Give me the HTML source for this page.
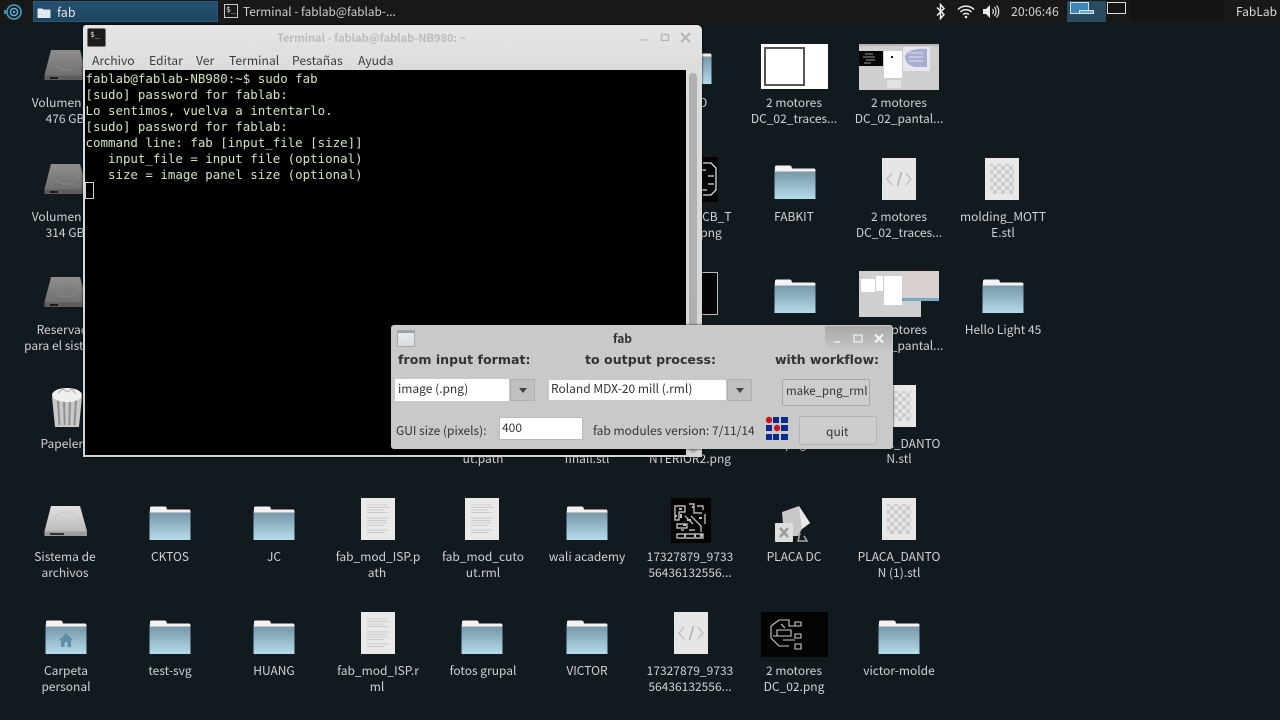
<!DOCTYPE html>
<html lang="es"><head><meta charset="utf-8"><title>Desktop</title>
<style>
*{box-sizing:border-box}
html,body{margin:0;padding:0;width:1280px;height:720px;overflow:hidden;background:#101a1f}
body{position:relative;font-family:"Noto Sans CJK SC","Liberation Sans",sans-serif}
.a{position:absolute}
.l{position:absolute;width:104px;margin-top:1px;text-align:center;color:#d2d2d2;font-size:12px;line-height:16px;white-space:nowrap}
svg{display:block;position:absolute;overflow:visible}
.term{position:absolute;left:85.500px;font:12.450px/16px "DejaVu Sans Mono",monospace;color:#cfe6bc;white-space:pre}
.m{position:absolute;top:52px;font-size:12.200px;line-height:16px;color:#3c3c3c}
.d{position:absolute;color:#333;white-space:nowrap}
.b{font-family:"DejaVu Sans",sans-serif;font-weight:700;font-size:12.600px;line-height:18px;color:#333;top:351px}
</style></head><body>
<svg width="0" height="0" style="position:absolute">
<defs>
<linearGradient id="fg" x1="0" y1="0" x2="0" y2="1"><stop offset="0" stop-color="#7a98a9"/><stop offset=".15" stop-color="#80a1b3"/><stop offset="1" stop-color="#b5dcea"/></linearGradient>
<linearGradient id="dg" x1="0" y1="0" x2="0" y2="1"><stop offset="0" stop-color="#8e8e8e"/><stop offset="1" stop-color="#6c6c6c"/></linearGradient>
<linearGradient id="dw" x1="0" y1="0" x2="0" y2="1"><stop offset="0" stop-color="#e2e2e2"/><stop offset="1" stop-color="#b4b4b4"/></linearGradient>
<symbol id="folder" viewBox="0 0 42 35" width="42" height="35">
<path d="M1 3.500V2q0-1.500 1.500-1.500H16q1.500 0 2 3H40q1.500 0 1.500 2V7H.5z" fill="#f2f2f2"/>
<path d="M.5 6.500H41.500V34H.5z" fill="url(#fg)"/>
</symbol>
<symbol id="doc" viewBox="0 0 34 42" width="34" height="42">
<rect width="34" height="42" fill="#e9e9e9"/>
<path d="M6 7h20M6 9.500h22M6 12h17M6 14.500h21M6 20h22M6 22.500h19M6 25h21M6 27.500h17M6 32h22M6 34.500h18" stroke="#cacaca" stroke-width="1"/>
</symbol>
<symbol id="code" viewBox="0 0 34 42" width="34" height="42">
<rect width="34" height="42" fill="#e6e6e6"/>
<path d="M10 15l-5 6 5 6M24 15l5 6-5 6" fill="none" stroke="#c4c4c4" stroke-width="1.500"/>
<path d="M19.500 14l-4 14" fill="none" stroke="#b0b0b0" stroke-width="1.500"/>
</symbol>
<pattern id="chk" width="8" height="8" patternUnits="userSpaceOnUse"><rect width="8" height="8" fill="#e6e6e6"/><rect width="4" height="4" fill="#cccccc"/><rect x="4" y="4" width="4" height="4" fill="#cccccc"/></pattern>
<symbol id="stl" viewBox="0 0 34 42" width="34" height="42">
<rect width="34" height="42" fill="#e8e8e8"/><rect x="5" y="6" width="24" height="30" fill="url(#chk)"/>
</symbol>
<symbol id="drive" viewBox="0 0 44 32" width="44" height="32">
<path d="M7 0H36L43 25V29H.5V25z" fill="url(#dg)"/>
<ellipse cx="22" cy="13" rx="11" ry="7" fill="none" stroke="#858585" stroke-width="1"/>
<path d="M.5 25.500H43V30H.5z" fill="#5d5d5d"/><rect x="6" y="27" width="8" height="2" fill="#1b1b1b"/>
</symbol>
<symbol id="drivew" viewBox="0 0 44 32" width="44" height="32">
<path d="M7 0H36L43 25V29H.5V25z" fill="url(#dw)"/>
<ellipse cx="22" cy="13" rx="11" ry="7" fill="none" stroke="#c8c8c8" stroke-width="1"/>
<path d="M.5 25.500H43V30H.5z" fill="#9c9c9c"/><rect x="6" y="27" width="14" height="2" fill="#333"/>
</symbol>
<symbol id="pcb" viewBox="0 0 40 45" width="40" height="45">
<rect width="40" height="45" fill="#050505"/>
<path d="M4 8h10v6H8v8H4zM18 6h5v9h8M26 8h6v4M6 26h10v4H6zM20 18l10 10v6M14 18l8 8M6 36h26v4H6zM34 16v10M10 32h3M18 32h6" fill="none" stroke="#d5d5d5" stroke-width="1.200"/>
<path d="M4 18h2M10 16v4M16 22h4M28 20h3M24 36v3M14 36v3M30 36v3M8 11h3M21 9h2M12 27h3M30 37h2" stroke="#bbb" stroke-width="2"/>
</symbol>
<symbol id="shot" viewBox="0 0 80 46" width="80" height="46">
<rect width="80" height="46" fill="#cfcfcf"/>
<rect y="0" width="80" height="2" fill="#b5b5b5"/>
<rect x="0" y="7" width="24" height="15" fill="#070707"/>
<path d="M6 10h8M4 13h12M7 16h9M5 19h7" stroke="#999" stroke-width="1"/>
<rect x="25" y="7" width="18" height="27" fill="#fff"/><rect x="32" y="12" width="2" height="2" fill="#111"/>
<rect x="44" y="3" width="27" height="24" fill="#e6e6ee"/>
<path d="M46 12c3-6 12-8 22-7v18H56c-6-1-10-5-10-11z" fill="#a7aed2"/>
<path d="M50 9h14M50 13h14M50 17h14" stroke="#dfe1ee" stroke-width="1"/>
<rect x="28" y="36" width="14" height="8" fill="#e2e2e2"/>
</symbol>
</defs>
</svg>

<!-- Top panel -->
<div class="a" style="left:0;top:0;width:1280px;height:23px;background:#181818"></div>
<svg style="left:3px;top:2px" width="20" height="20" viewBox="0 0 20 20"><circle cx="11" cy="10" r="7" fill="none" stroke="#3e93b8" stroke-width="1.800"/><circle cx="11" cy="10" r="3.600" fill="none" stroke="#5fb4d8" stroke-width="1.500"/><circle cx="11" cy="10" r="1.300" fill="#5fb4d8"/><path d="M2 8v4M1 9.500h2" stroke="#3e93b8" stroke-width="2"/></svg>
<div class="a" style="left:33px;top:1px;width:185px;height:21px;background:linear-gradient(#234f70,#1d4560);border:1px solid #2a5878"></div>
<svg style="left:37px;top:7px" width="14" height="11" viewBox="0 0 14 11"><path d="M.5 1.500h5l1 1h7V11H.5z" fill="#dfe9ee"/></svg>
<div class="a" style="left:57px;top:3px;font-size:12.500px;line-height:17px;color:#e6e6e6">fab</div>
<div class="a" style="left:224px;top:4px;width:14px;height:14px;background:#1a1a1a;border:1px solid #c8c8c8;color:#ddd;font:8px/10px 'DejaVu Sans Mono',monospace;padding-left:1px">$_</div>
<div class="a" style="left:243px;top:3px;font-size:11.800px;line-height:17px;color:#d0d0d0;white-space:nowrap">Terminal - fablab@fablab-...</div>
<svg style="left:935px;top:3px" width="12" height="17" viewBox="0 0 12 17"><path d="M2 4.500l7 7-3.500 4V1.500l3.500 4-7 7" fill="none" stroke="#eee" stroke-width="1.500"/></svg>
<svg style="left:957px;top:4px" width="18" height="15" viewBox="0 0 18 15"><path d="M1 5.500c4.500-4.500 11.500-4.500 16 0M3.500 8c3-3 8-3 11 0M6 10.500c1.500-1.500 4.500-1.500 6 0" fill="none" stroke="#eee" stroke-width="1.500"/><circle cx="9" cy="13" r="1.300" fill="#eee"/></svg>
<svg style="left:982px;top:4px" width="18" height="15" viewBox="0 0 18 15"><path d="M1 5h3l4-4v13l-4-4H1z" fill="#eee"/><path d="M10.500 5c1 1.500 1 3.500 0 5M12.500 3c2 2.500 2 6.500 0 9M14.500 1.500c3 3.500 3 8.500 0 12" fill="none" stroke="#ddd" stroke-width="1.200"/></svg>
<div class="a" style="left:1011px;top:3px;font-size:12.300px;line-height:17px;color:#d0d0d0">20:06:46</div>
<div class="a" style="left:1067px;top:1px;width:39px;height:21px;background:#2b4b60"></div>
<div class="a" style="left:1070px;top:2px;width:19px;height:12px;background:#3d87b8;border:1px solid #cfe3ee"></div>
<div class="a" style="left:1079px;top:10px;width:15px;height:4px;background:#6aa9c9;border:1px solid #cfe3ee"></div>
<div class="a" style="left:1107px;top:2px;width:19px;height:12px;background:#151515;border:1px solid #dedede"></div>
<div class="a" style="left:1130px;top:1px;width:94px;height:21px;background:#141414"></div>
<div class="a" style="left:1236px;top:3px;font-size:12px;line-height:17px;color:#d8d8d8">FabLab</div>

<!-- Desktop icons: col 0 -->
<svg style="left:44px;top:50px" width="44" height="32"><use href="#drive"/></svg>
<div class="l" style="left:13px;top:94px">Volumen de</div><div class="l" style="left:13px;top:110px">476 GB</div>
<svg style="left:44px;top:164px" width="44" height="32"><use href="#drive"/></svg>
<div class="l" style="left:13px;top:208px">Volumen de</div><div class="l" style="left:13px;top:224px">314 GB</div>
<svg style="left:44px;top:277px" width="44" height="32"><use href="#drive"/></svg>
<div class="l" style="left:14px;top:321px">Reservado</div><div class="l" style="left:14px;top:337px">para el sistema</div>
<svg style="left:50px;top:386px" width="34" height="42" viewBox="0 0 34 42"><path d="M2 11H32L29 41H5z" fill="#c9c9c9"/><path d="M8 14l1.500 25M14 14l.7 25M20 14l-.7 25M26 14l-1.500 25" stroke="#8f8f8f" stroke-width="2"/><ellipse cx="17" cy="9" rx="15" ry="7" fill="#efefef"/><path d="M8 7l5-4 4 3 5-3 4 5" fill="none" stroke="#aaa"/></svg>
<div class="l" style="left:13px;top:435px">Papelera</div>
<svg style="left:44px;top:506px" width="44" height="32"><use href="#drivew"/></svg>
<div class="l" style="left:13px;top:548px">Sistema de</div><div class="l" style="left:13px;top:564px">archivos</div>
<svg style="left:45px;top:620px" width="42" height="35"><use href="#folder"/></svg>
<svg style="left:59px;top:633px" width="14" height="14" viewBox="0 0 14 14"><path d="M0 7L7 0l7 7h-2v7H8.500V9h-3v5H2V7z" fill="#5f8fa5"/></svg>
<div class="l" style="left:14px;top:662px">Carpeta</div><div class="l" style="left:14px;top:678px">personal</div>

<!-- col 1-5 bottom -->
<svg style="left:149px;top:506px" width="42" height="35"><use href="#folder"/></svg>
<div class="l" style="left:118px;top:548px">CKTOS</div>
<svg style="left:149px;top:620px" width="42" height="35"><use href="#folder"/></svg>
<div class="l" style="left:118px;top:662px">test-svg</div>
<svg style="left:253px;top:506px" width="42" height="35"><use href="#folder"/></svg>
<div class="l" style="left:222px;top:548px">JC</div>
<svg style="left:253px;top:620px" width="42" height="35"><use href="#folder"/></svg>
<div class="l" style="left:222px;top:662px">HUANG</div>
<svg style="left:361px;top:498px" width="34" height="42"><use href="#doc"/></svg>
<div class="l" style="left:326px;top:548px">fab_mod_ISP.p</div><div class="l" style="left:325px;top:564px">ath</div>
<svg style="left:361px;top:612px" width="34" height="42"><use href="#doc"/></svg>
<div class="l" style="left:326px;top:662px">fab_mod_ISP.r</div><div class="l" style="left:325px;top:678px">ml</div>
<svg style="left:465px;top:498px" width="34" height="42"><use href="#doc"/></svg>
<div class="l" style="left:431px;top:548px">fab_mod_cuto</div><div class="l" style="left:431px;top:564px">ut.rml</div>
<svg style="left:461px;top:620px" width="42" height="35"><use href="#folder"/></svg>
<div class="l" style="left:431px;top:662px">fotos grupal</div>
<svg style="left:566px;top:506px" width="42" height="35"><use href="#folder"/></svg>
<div class="l" style="left:535px;top:548px">wali academy</div>
<svg style="left:566px;top:620px" width="42" height="35"><use href="#folder"/></svg>
<div class="l" style="left:535px;top:662px">VICTOR</div>

<!-- col 6 -->
<svg style="left:671px;top:498px" width="40" height="45"><use href="#pcb"/></svg>
<div class="l" style="left:638px;top:548px">17327879_9733</div><div class="l" style="left:638px;top:564px">56436132556...</div>
<svg style="left:674px;top:612px" width="34" height="42"><use href="#code"/></svg>
<div class="l" style="left:638px;top:662px">17327879_9733</div><div class="l" style="left:638px;top:678px">56436132556...</div>

<!-- col 7 -->
<svg style="left:774px;top:505px" width="38" height="38" viewBox="0 0 38 38"><path d="M8 7l17-6 11 17-8 6-4 7H10z" fill="#c7c7c7"/><path d="M25 1l11 17-8 6z" fill="#e8e8e8"/><path d="M26 28l-2 8h9l-3-5" fill="none" stroke="#aaa" stroke-width="1.500"/><rect x="1" y="18" width="18" height="19" rx="1" fill="#dedede"/><path d="M6 23l8 9M14 23l-8 9" stroke="#9b9b9b" stroke-width="2.500"/></svg>
<div class="l" style="left:742px;top:548px">PLACA DC</div>
<svg style="left:761px;top:612px" width="67" height="45" viewBox="0 0 67 45"><rect width="67" height="45" fill="#040404"/><path d="M10 14l8-6h10v6h9M10 14v12l8 8h10M16 18h14v6H16zM34 10h6v4h-6zM34 22h6v4h-6zM34 32h6v5h-6zM22 28h12M20 12l4 4M12 24h6" fill="none" stroke="#ccc" stroke-width="1.100"/></svg>
<div class="l" style="left:742px;top:662px">2 motores</div><div class="l" style="left:742px;top:678px">DC_02.png</div>

<!-- col 8 -->
<svg style="left:882px;top:498px" width="34" height="42"><use href="#stl"/></svg>
<div class="l" style="left:847px;top:548px">PLACA_DANTO</div><div class="l" style="left:847px;top:564px">N (1).stl</div>
<svg style="left:878px;top:620px" width="42" height="35"><use href="#folder"/></svg>
<div class="l" style="left:847px;top:662px">victor-molde</div>

<!-- upper right icons -->
<svg style="left:691px;top:50px" width="21" height="36" viewBox="21 0 21 36"><use href="#folder"/></svg>
<div class="l" style="left:638px;top:94px">2 AMD</div>
<div class="a" style="left:761px;top:44px;width:67px;height:45px;background:#fff"><div class="a" style="left:3px;top:3px;width:41px;height:39px;border:2px solid #555"></div></div>
<div class="l" style="left:742px;top:94px">2 motores</div><div class="l" style="left:742px;top:110px">DC_02_traces...</div>
<svg style="left:859px;top:44px" width="80" height="46"><use href="#shot"/></svg>
<div class="l" style="left:847px;top:94px">2 motores</div><div class="l" style="left:847px;top:110px">DC_02_pantal...</div>

<div class="a" style="left:690px;top:157px;width:28px;height:45px;background:#050505"></div>
<svg style="left:700px;top:160px" width="18" height="38" viewBox="0 0 18 38"><path d="M3 3h8l5 5v22l-5 5H3M2 10h4M8 16h6M8 24h6M2 30h5" fill="none" stroke="#ddd" stroke-width="1.300"/></svg>
<div class="l" style="left:661px;top:208px">PCB_T</div><div class="l" style="left:659px;top:224px">png</div>
<svg style="left:774px;top:165px" width="42" height="35"><use href="#folder"/></svg>
<div class="l" style="left:742px;top:208px">FABKIT</div>
<svg style="left:882px;top:158px" width="34" height="42"><use href="#code"/></svg>
<div class="l" style="left:847px;top:208px">2 motores</div><div class="l" style="left:847px;top:224px">DC_02_traces...</div>
<svg style="left:985px;top:158px" width="34" height="42"><use href="#stl"/></svg>
<div class="l" style="left:951px;top:208px">molding_MOTT</div><div class="l" style="left:951px;top:224px">E.stl</div>

<div class="a" style="left:690px;top:272px;width:28px;height:43px;background:#050505;border:1px solid #bbb"></div>
<svg style="left:774px;top:279px" width="42" height="35"><use href="#folder"/></svg>
<svg style="left:859px;top:271px" width="80" height="46" viewBox="0 0 80 46"><rect width="62" height="46" fill="#cfcfcf"/><rect x="43" width="37" height="28" fill="#d8cfcf"/><rect x="43" y="27" width="37" height="3" fill="#7aa9c5"/><rect x="2" y="8" width="14" height="13" fill="#fff"/><rect x="17" y="5" width="7" height="15" fill="#fff"/><rect x="25" y="5" width="18" height="29" fill="#fff"/></svg>
<div class="l" style="left:847px;top:321px">2 motores</div><div class="l" style="left:847px;top:337px">DC_02_pantal...</div>
<svg style="left:982px;top:279px" width="42" height="35"><use href="#folder"/></svg>
<div class="l" style="left:951px;top:321px">Hello Light 45</div>

<svg style="left:882px;top:385px" width="34" height="42"><use href="#stl"/></svg>
<div class="l" style="left:847px;top:435px">PLACA_DANTO</div><div class="l" style="left:847px;top:450px">N.stl</div>
<div class="l" style="left:431px;top:450px">ut.path</div>
<div class="l" style="left:535px;top:450px">finall.stl</div>
<div class="l" style="left:638px;top:450px">NTERIOR2.png</div>
<div class="l" style="left:742px;top:435px">.png</div>

<!-- Terminal window -->
<div class="a" style="left:83px;top:25px;width:619px;height:432px;background:linear-gradient(#e6e6e6,#dcdcdc 10%,#d4d4d4);border-radius:3px 5px 0 0;box-shadow:0 0 2px #000"></div>
<div class="a" style="left:87px;top:28px;width:19px;height:19px;background:#1c1c1c;border:1px solid #777;border-radius:2px;color:#ddd;font:8px/11px 'DejaVu Sans Mono',monospace;padding-left:2px">$_</div>
<div class="a" style="left:277px;top:30px;font-size:11px;line-height:16px;font-weight:700;color:#bcbcbc;white-space:nowrap">Terminal - fablab@fablab-NB980: ~</div>
<svg style="left:640px;top:30px" width="55" height="16" viewBox="0 0 55 16"><path d="M1 10h7" stroke="#c2c2c2" stroke-width="1.500"/><rect x="21.500" y="4.500" width="7" height="6" fill="none" stroke="#b4b4b4" stroke-width="1.300"/><path d="M41 3l9 9M50 3l-9 9" stroke="#b0b0b0" stroke-width="1.800"/></svg>
<div style="position:absolute;left:0;top:0"><div class="m" style="left:92px">Archivo</div><div class="m" style="left:149px">Editar</div><div class="m" style="left:196px">Ver</div><div class="m" style="left:229px">Terminal</div><div class="m" style="left:292px">Pestañas</div><div class="m" style="left:358px">Ayuda</div></div>
<div class="a" style="left:85px;top:70px;width:601px;height:385px;background:#000"></div>
<div class="a" style="left:689px;top:73px;width:8px;height:380px;background:#b0b0b0;border-radius:4px"></div>
<div class="term" style="top:71px">fablab@fablab-NB980:~$ sudo fab</div>
<div class="term" style="top:87px">[sudo] password for fablab:</div>
<div class="term" style="top:103px">Lo sentimos, vuelva a intentarlo.</div>
<div class="term" style="top:119px">[sudo] password for fablab:</div>
<div class="term" style="top:135px">command line: fab [input_file [size]]</div>
<div class="term" style="top:151px">   input_file = input file (optional)</div>
<div class="term" style="top:167px">   size = image panel size (optional)</div>
<div class="a" style="left:85px;top:182px;width:9px;height:17px;border:1px solid #cfcfcf"></div>

<!-- fab dialog -->
<div class="a" style="left:391px;top:325px;width:502px;height:124px;background:#c9c9c9;border-radius:3px;box-shadow:0 0 2px #111"></div>
<div class="a" style="left:397px;top:330px;width:18px;height:17px;background:linear-gradient(#8fa3ae 0,#8fa3ae 2px,#e8eaec 2px,#d8dcde);border:1px solid #aaa"></div>
<div class="a" style="left:613px;top:331px;font-size:12px;line-height:15px;font-weight:700;color:#333">fab</div>
<div class="a" style="left:825px;top:326px;width:67px;height:24px;background:linear-gradient(#a9a9a9,#c4c4c4);border-radius:0 2px 0 8px"></div>
<svg style="left:830px;top:332px" width="56" height="14" viewBox="0 0 56 14"><path d="M4 10h6" stroke="#eee" stroke-width="1.500"/><rect x="24" y="3" width="8" height="7" fill="none" stroke="#eee" stroke-width="1.300"/><path d="M45 2.500l8 8M53 2.500l-8 8" stroke="#f4f4f4" stroke-width="2"/></svg>
<div class="d b" style="left:398px">from input format:</div>
<div class="d b" style="left:585px">to output process:</div>
<div class="d b" style="left:775px;letter-spacing:-.1px">with workflow:</div>
<div class="a" style="left:395px;top:379px;width:114px;height:22px;background:#fff"></div>
<div class="a" style="left:510px;top:379px;width:25px;height:22px;background:#c0c0c0;border:1px solid #b0b0b0"></div>
<svg style="left:518px;top:387px" width="10" height="7" viewBox="0 0 10 7"><path d="M1 1h8L5 6z" fill="#444"/></svg>
<div class="d" style="left:398px;top:380px;font-size:12px;line-height:17px">image (.png)</div>
<div class="a" style="left:548px;top:379px;width:179px;height:22px;background:#fff;border:1px solid #c8c8c8"></div>
<div class="a" style="left:727px;top:379px;width:25px;height:22px;background:#c0c0c0;border:1px solid #b0b0b0"></div>
<svg style="left:735px;top:387px" width="10" height="7" viewBox="0 0 10 7"><path d="M1 1h8L5 6z" fill="#444"/></svg>
<div class="d" style="left:551px;top:380px;font-size:12px;line-height:17px">Roland MDX-20 mill (.rml)</div>
<div class="a" style="left:782px;top:379px;width:88px;height:27px;background:#cdcdcd;border:1px solid #a8a8a8;border-radius:2px"></div>
<div class="d" style="left:786px;top:383px;font-size:11.500px;line-height:17px">make_png_rml</div>
<div class="d" style="left:396px;top:422px;font-size:12px;line-height:17px">GUI size (pixels):</div>
<div class="a" style="left:499px;top:417px;width:84px;height:23px;background:#fff;border:1px solid #bbb"></div>
<div class="d" style="left:502px;top:420px;font-size:12px;line-height:16px">400</div>
<div class="d" style="left:593px;top:422px;font-size:12px;line-height:17px">fab modules version: 7/11/14</div>
<svg style="left:765px;top:416px" width="24" height="25" viewBox="0 0 24 25"><path d="M8 1h6v6H8zM16 1h7v6h-7zM1 9h6v6H1zM16 9h7v6h-7zM1 18h6v6H1zM8 18h6v6H8zM16 18h7v6h-7z" fill="#0a2a8c"/><circle cx="4" cy="4" r="3.200" fill="#c8151b"/><circle cx="12" cy="12" r="3.200" fill="#c8151b"/></svg>
<div class="a" style="left:799px;top:416px;width:78px;height:29px;background:#cdcdcd;border:1px solid #b5b5b5;border-radius:2px"></div>
<div class="d" style="left:826px;top:423px;font-size:12px;line-height:17px">quit</div>
</body></html>
